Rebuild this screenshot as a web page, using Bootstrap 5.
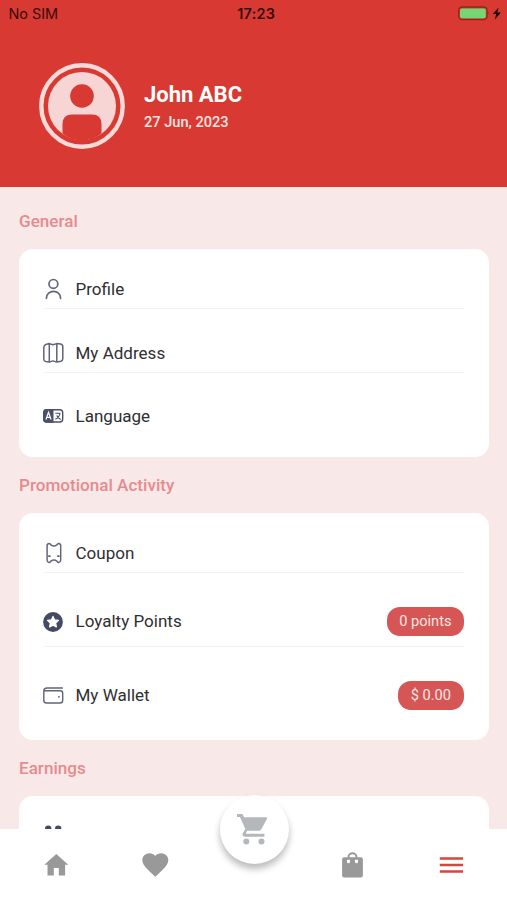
<!DOCTYPE html>
<html lang="en">
<head>
<meta charset="utf-8">
<meta name="viewport" content="width=device-width, initial-scale=1">
<title>Account menu</title>
<link href="https://cdn.jsdelivr.net/npm/bootstrap@5.3.0/dist/css/bootstrap.min.css" rel="stylesheet">
<style>
html, body { height: 100%; }
body { font-family: Roboto, "Liberation Sans", sans-serif; color: #2f2f31; background: #f8e8e8; }
svg { display: block; flex: none; overflow: visible; }
.app { height: 900px; }
.hero { height: 186.5px; background: #d83a33; flex: none; }
.status { height: 27px; padding: 0 5px 0 8.5px; font: 400 14.4px/27px Inter, sans-serif; color: #350b0a; display: grid; grid-template-columns: 1fr auto 1fr; }
.status .clock { font-weight: 600; letter-spacing: .3px; padding-left: 2px; }
.who { padding: 36px 0 0 38.5px; gap: 19.5px; }
.who-name { font-size: 22px; line-height: 28px; font-weight: 700; padding-top: 1px; }
.who-date { font-size: 14.6px; line-height: 20px; font-weight: 500; margin-top: 3px; color: #fbe3e1; }
.sections { padding: 0 18.5px 0 19px; min-height: 0; }
.heading { font-size: 17.1px; font-weight: 500; line-height: 24px; color: #e68b8d; margin: 0; padding: 16px 0; }
.heading:first-child { padding: 22px 0 16.5px; }
.panel { background: #fff; border-radius: 14px; padding: 0 24.5px; }
.entry { padding: 32px 0 7px; border-bottom: 1px solid #f3f3f4; font-size: 17.05px; line-height: 24px; gap: 11.5px; }
.entry > svg { margin-left: -.5px; }
.entry:first-child { padding-top: 28px; }
.entry:last-child { border-bottom: 0; padding-top: 31px; padding-bottom: 29px; }
.entry:only-child { padding-top: 29px; }
.entry.valued { padding-top: 34px; padding-bottom: 10px; line-height: 29px; }
.entry.valued:last-child { padding-bottom: 29.5px; }
.pill { background: #d55654; color: #fbe6e4; height: 29px; border-radius: 13px; padding: 0 12.5px; font-size: 14.6px; }
.entry:last-child .pill { padding: 0 13px 0 12.5px; }
.tabs { height: 71px; background: #fff; flex: none; padding: 1px 7px 0; }
.fab { width: 69px; height: 69px; border-radius: 50%; background: #fff; top: -34px; left: 219.5px; box-shadow: 0 5px 7px rgba(0,0,0,.27); }
.fab svg { margin-right: 3px; }
</style>
<script src="https://cdn.jsdelivr.net/npm/bootstrap@5.3.0/dist/js/bootstrap.bundle.min.js"></script>
</head>
<body>
<div class="app d-flex flex-column overflow-hidden">
  <header class="hero">
    <div class="status">
      <span>No SIM</span>
      <span class="clock">17:23</span>
      <svg class="ms-auto" width="44" height="27" viewBox="0 0 44 27">
        <rect x=".7" y="7" width="28.400" height="12.600" rx="3.500" fill="none" stroke="#92271f" stroke-width="1.400"/>
        <rect x="2" y="8.400" width="25.800" height="9.800" rx="2" fill="#76d672"/>
        <path d="M30.700 11.200q1.500 2 0 4z" fill="#92271f"/>
        <path d="M40.600 7.600l-5.800 6.500h3.400l-1.300 5.400 6-7h-3.500z" fill="#180302"/>
      </svg>
    </div>
    <div class="who d-flex align-items-center">
      <svg width="86" height="86" viewBox="0 0 86 86">
        <circle cx="43" cy="43" r="40.700" fill="none" stroke="#fadad9" stroke-width="4.400"/>
        <circle cx="43" cy="43" r="34" fill="#f6d5d4"/>
        <circle cx="43" cy="33" r="11.800" fill="#d83a33"/>
        <path d="M23.500 70.500V61q0-9.500 9.500-9.500h20q9.500 0 9.500 9.500v9.500Q54 77.500 43 77.500T23.500 70.500z" fill="#d83a33"/>
      </svg>
      <div class="text-white">
        <div class="who-name">John ABC</div>
        <div class="who-date">27 Jun, 2023</div>
      </div>
    </div>
  </header>

  <main class="sections flex-grow-1 overflow-hidden">
    <h2 class="heading">General</h2>
    <div class="panel">
      <div class="entry d-flex align-items-center">
        <svg width="21" height="22" viewBox="0 0 21 22" fill="none" stroke="#62677c" stroke-width="1.700" stroke-linecap="round">
          <circle cx="10.400" cy="5.900" r="4.400"/><path d="M3.400 20.300c0-9.200 14.200-9.200 14.200 0"/>
        </svg>
        <span>Profile</span>
      </div>
      <div class="entry d-flex align-items-center">
        <svg width="21" height="22" viewBox="0 0 21 22" fill="none" stroke="#5f647a" stroke-width="1.500" stroke-linejoin="round">
          <path d="M.8 5.500Q.8 3.300 2.800 2.500l3.500-.9 3.500 1.200 4-1.200 3.800.5q2.200.500 2.200 2.600v12q0 1.800-1.800 2.500l-4.200.900-4-1.200-3.500 1.200-3.700-.6Q.8 19 .8 17zM6.300 1.600v18.500M13.800 1.600v18.500"/>
        </svg>
        <span>My Address</span>
      </div>
      <div class="entry d-flex align-items-center">
        <svg width="21" height="14" viewBox="0 0 21 14">
          <rect x=".7" y=".7" width="19" height="12.300" rx="3" fill="#fff" stroke="#4b5068" stroke-width="1.400"/>
          <path d="M3.500 0H10.500V13.700H3.500Q0 13.700 0 10.200V3.500Q0 0 3.500 0z" fill="#4b5068"/>
          <path d="M3 10.500L5.500 3.400 8 10.500M3.900 8.300h3.200" fill="none" stroke="#fff" stroke-width="1.200"/>
          <path d="M12.300 4.200h5M17 4.200q-.5 4-4.700 6M13.700 6.500q1.200 2.800 4 4" fill="none" stroke="#4b5068" stroke-width="1.100"/>
        </svg>
        <span>Language</span>
      </div>
    </div>

    <h2 class="heading">Promotional Activity</h2>
    <div class="panel">
      <div class="entry d-flex align-items-center">
        <svg width="21" height="22" viewBox="0 0 21 22">
          <path d="M6 1.500q1.300.2 1.900 1.400 3 2.200 6 0Q14.500 1.700 15.800 1.500q1.900.2 1.900 2.300v14.200q0 2.100-1.900 2.500-1.300-.2-1.900-1.400-3-2.200-6 0-.6 1.200-1.900 1.400-1.900-.4-1.900-2.500V3.800q0-2.100 1.900-2.300z" fill="none" stroke="#62667a" stroke-width="1.500" stroke-linejoin="round"/>
          <path d="M6 14.200h.8M15 14.200h.8" stroke="#55596e" stroke-width="1.800" stroke-linecap="round"/>
        </svg>
        <span>Coupon</span>
      </div>
      <div class="entry valued d-flex align-items-center">
        <svg width="21" height="20" viewBox="0 0 21 20">
          <circle cx="10" cy="10" r="9.900" fill="#454a64"/>
          <path d="M10 4.400l1.700 3.500 3.800.500-2.800 2.700.7 3.800-3.400-1.800-3.400 1.800.7-3.800-2.800-2.700 3.800-.5z" fill="#fff" stroke="#fff" stroke-width="1.200" stroke-linejoin="round"/>
        </svg>
        <span>Loyalty Points</span>
        <span class="pill ms-auto">0 points</span>
      </div>
      <div class="entry valued d-flex align-items-center">
        <svg width="21" height="17" viewBox="0 0 21 17" fill="none" stroke="#5f6377" stroke-width="1.400" stroke-linecap="round">
          <path d="M19.300 1H4Q.8 1 .8 4v9.200Q.8 16 3.600 16h13.300q2.800 0 2.800-2.800V6.300q0-2.500-2.500-2.500H3.400Q.8 3.800.8 2.900"/>
          <path d="M15.900 9.800h.1" stroke-width="1.800"/>
        </svg>
        <span>My Wallet</span>
        <span class="pill ms-auto">$ 0.00</span>
      </div>
    </div>

    <h2 class="heading">Earnings</h2>
    <div class="panel">
      <div class="entry d-flex align-items-center">
        <svg width="21" height="22" viewBox="0 0 21 22" fill="#454a64">
          <circle cx="5.200" cy="3.800" r="3.200"/><circle cx="15.200" cy="3.800" r="3.200"/>
          <path d="M0 18q0-7 5.200-7t5.200 7zM10.800 18q0-7 4.700-7t5.200 7z"/>
        </svg>
      </div>
    </div>
  </main>

  <nav class="tabs position-relative d-flex align-items-center">
    <div class="col d-flex justify-content-center"><svg width="24" height="22" viewBox="0 0 24 22"><path d="M12.300 0L.3 10.800h3.200V21.500h6.300v-7.400h5v7.400h6.300V10.800h3.200z" fill="#999"/></svg></div>
    <div class="col d-flex justify-content-center"><svg width="26" height="24" viewBox="0 0 26 24"><path d="M13.300 23.700l-1.900-1.700C4.800 16 .3 12 .3 7.100 .3 3.100 3.400.2 7.300.2c2.300 0 4.600 1 6 2.800C14.700 1.200 17 .2 19.300.2c3.900 0 7 2.900 7 6.900 0 4.900-4.500 8.900-11.100 14.900z" fill="#999"/></svg></div>
    <div class="col"></div>
    <div class="col d-flex justify-content-center"><svg width="21" height="26" viewBox="0 0 21 26"><path fill-rule="evenodd" d="M2.200 5.200h3.300a5 5 0 0 1 10 0h3.300q2.100 0 2.100 2.100v16.200q0 2.100-2.100 2.100H2.200Q.1 25.600.1 23.500V7.300q0-2.100 2.100-2.100zM7.500 5.200h6a3 3 0 0 0-6 0zM5 7.700v2.100a1.500 1.500 0 0 0 3 0V7.700zm8 0v2.100a1.500 1.500 0 0 0 3 0V7.700z" fill="#999"/></svg></div>
    <div class="col d-flex justify-content-center"><svg width="24" height="16" viewBox="0 0 24 16"><path d="M.8 1.400h23.200M.8 7.900h23.200M.8 14.400h23.200" stroke="#d9443d" stroke-width="2.500"/></svg></div>
    <div class="fab position-absolute d-flex align-items-center justify-content-center">
      <svg width="31" height="31" viewBox="0 0 31 31" fill="#b4b8bb"><path d="M0 0h5.500l1.600 3.300H29q1.800 0 .9 1.700l-5.600 10.200q-.9 1.600-2.800 1.600H10.200l-1.300 2.400q-.2.600.5.600h18v3H8.500q-3.800 0-2.700-3.500l2.500-4.400L2.900 3H0z"/><circle cx="9.300" cy="27.600" r="3"/><circle cx="24.500" cy="27.600" r="3"/></svg>
    </div>
  </nav>
</div>
</body>
</html>
